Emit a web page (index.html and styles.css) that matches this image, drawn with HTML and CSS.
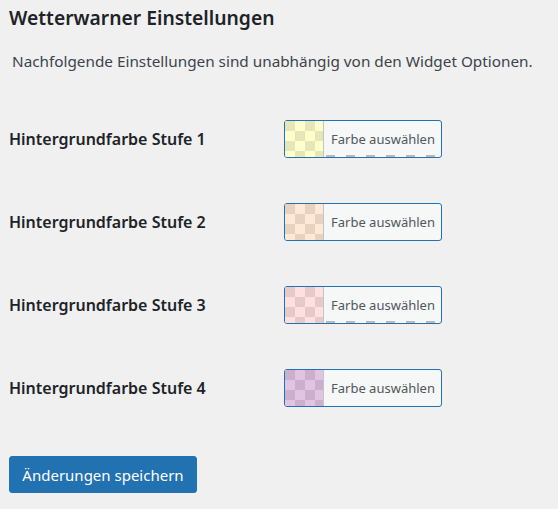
FILE: index.html
```html
<!DOCTYPE html>
<html lang="de">
<head>
<meta charset="utf-8">
<link rel="stylesheet" href="styles.css">
</head>
<body>
<div class="wrap">
  <h2 class="title">Wetterwarner Einstellungen</h2>
  <p class="intro">Nachfolgende Einstellungen sind unabhängig von den Widget Optionen.</p>
  <div class="settings">
    <div class="row">
      <div class="label">Hintergrundfarbe Stufe 1</div>
      <button class="color-btn focus dashed" type="button"><span class="swatch s1"></span><span class="btn-text">Farbe auswählen</span></button>
    </div>
    <div class="row">
      <div class="label">Hintergrundfarbe Stufe 2</div>
      <button class="color-btn" type="button"><span class="swatch s2"></span><span class="btn-text">Farbe auswählen</span></button>
    </div>
    <div class="row">
      <div class="label">Hintergrundfarbe Stufe 3</div>
      <button class="color-btn dashed" type="button"><span class="swatch s3"></span><span class="btn-text">Farbe auswählen</span></button>
    </div>
    <div class="row">
      <div class="label">Hintergrundfarbe Stufe 4</div>
      <button class="color-btn" type="button"><span class="swatch s4"></span><span class="btn-text">Farbe auswählen</span></button>
    </div>
  </div>
  <button class="save" type="button">Änderungen speichern</button>
</div>
</body>
</html>
```
FILE: styles.css
```css
html, body {
  margin: 0;
  padding: 0;
  background: #f0f0f1;
}
body {
  font-family: "Noto Sans", "Liberation Sans", sans-serif;
  color: #1d2327;
}
.wrap {
  padding: 5px 0 0 9px;
}
.title {
  margin: 0;
  font-size: 19.3px;
  font-weight: 600;
  line-height: 26px;
  color: #1d2327;
}
.intro {
  margin: 20px 0 0 3px;
  font-size: 15.3px;
  line-height: 20px;
  color: #3c434a;
}
.settings {
  display: flex;
  flex-direction: column;
  gap: 45px;
  margin-top: 49px;
}
.row {
  display: flex;
  align-items: center;
  height: 38px;
}
.label {
  width: 275px;
  font-size: 16px;
  font-weight: 600;
  color: #1d2327;
}
.color-btn {
  display: flex;
  align-items: stretch;
  width: 158px;
  height: 38px;
  padding: 0;
  border: 1px solid #2271b1;
  border-radius: 3px;
  background: #f6f7f7;
  overflow: hidden;
  font-family: inherit;
  cursor: pointer;
}
.swatch {
  width: 38px;
  border-right: 1px solid #c3c4c7;
  background-size: 20px 20px;
}
.s1 {
  background-color: #ffffcc;
  background-image: linear-gradient(45deg, #e6e6b8 25%, transparent 25%, transparent 75%, #e6e6b8 75%), linear-gradient(45deg, #e6e6b8 25%, transparent 25%, transparent 75%, #e6e6b8 75%);
  background-position: 10px 0, 0 10px;
}
.s2 {
  background-color: #ffe9d6;
  background-image: linear-gradient(45deg, #e6d2c1 25%, transparent 25%, transparent 75%, #e6d2c1 75%), linear-gradient(45deg, #e6d2c1 25%, transparent 25%, transparent 75%, #e6d2c1 75%);
  background-position: 10px 0, 0 10px;
}
.s3 {
  background-color: #ffdfdf;
  background-image: linear-gradient(45deg, #e6c9c9 25%, transparent 25%, transparent 75%, #e6c9c9 75%), linear-gradient(45deg, #e6c9c9 25%, transparent 25%, transparent 75%, #e6c9c9 75%);
  background-position: 10px 0, 0 10px;
}
.s4 {
  background-color: #e1c4e1;
  background-image: linear-gradient(45deg, #cbb0cb 25%, transparent 25%, transparent 75%, #cbb0cb 75%), linear-gradient(45deg, #cbb0cb 25%, transparent 25%, transparent 75%, #cbb0cb 75%);
  background-position: 10px 0, 0 10px;
}
.btn-text {
  flex: 1;
  display: flex;
  align-items: center;
  padding-left: 7px;
  font-size: 13px;
  color: #50575e;
}
.dashed .btn-text {
  background-image: repeating-linear-gradient(90deg, transparent 0, transparent 2px, #b8b9bc 2px, #b8b9bc 11px, transparent 11px, transparent 20px);
  background-size: 100% 2px;
  background-repeat: no-repeat;
  background-position: 0 100%;
}
.save {
  display: block;
  margin-top: 49px;
  width: 188px;
  height: 37px;
  padding: 0;
  border: 1px solid #2271b1;
  border-radius: 3px;
  background: #2271b1;
  color: #fff;
  font-family: inherit;
  font-size: 15px;
  cursor: pointer;
}
```
